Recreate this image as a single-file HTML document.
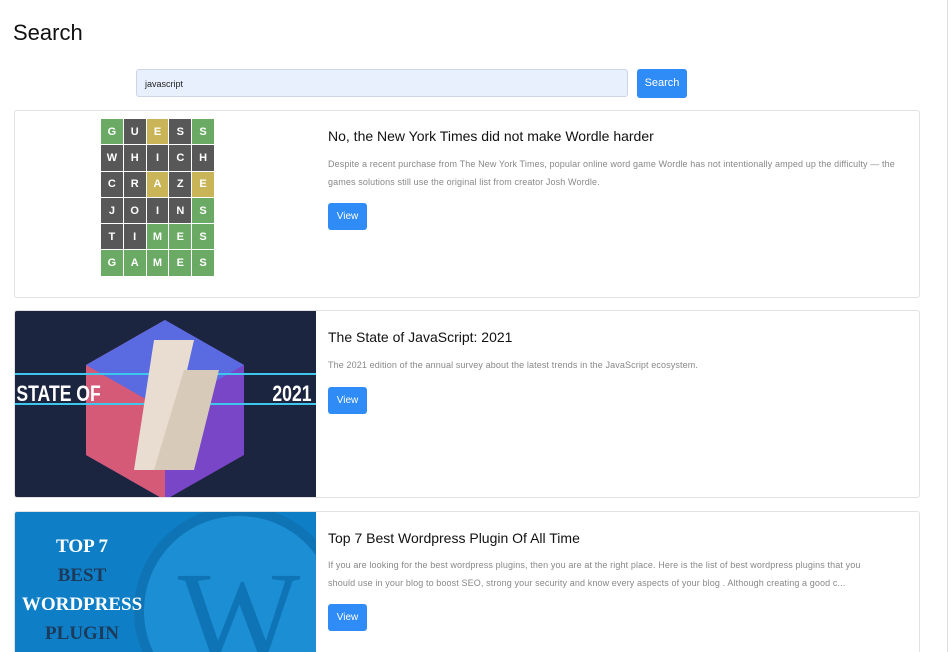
<!DOCTYPE html>
<html><head><meta charset="utf-8"><style>
*{box-sizing:border-box;margin:0;padding:0}
html,body{width:950px;height:652px;overflow:hidden}
body{background:#fff;font-family:"Liberation Sans",sans-serif;position:relative}
h1{position:absolute;left:13px;top:20px;font-size:22px;font-weight:400;color:#111}
.inp{position:absolute;left:136px;top:69px;width:492px;height:28px;background:#e8f0fe;border:1px solid #ccd6e6;border-radius:3px;font-size:9px;padding:9px 8px;color:#222}
.sbtn{position:absolute;left:637px;top:69px;width:50px;height:29px;background:#2f8bf5;border-radius:3px;color:#fff;font-size:11px;text-align:center;line-height:29px}
.card{position:absolute;left:14px;width:906px;border:1px solid #e2e2e2;border-radius:3px;overflow:hidden;background:#fff}
.img{position:absolute;left:-1px;top:-1px;width:302px;height:188px}
.t{position:absolute;left:313px;font-size:14px;color:#111}
.d{position:absolute;left:313px;width:580px;font-size:9px;line-height:18px;color:#888;letter-spacing:0.12px}
.v{position:absolute;left:313px;width:39px;height:27px;background:#2f8bf5;border-radius:3px;color:#fff;font-size:10px;text-align:center;line-height:27px}
.grid{position:absolute;left:86px;top:8px;display:grid;grid-template-columns:repeat(5,21.8px);grid-auto-rows:25.3px;gap:1px}
.grid div{color:#fff;font-size:11px;display:flex;align-items:center;justify-content:center;font-weight:bold}
.g{background:#6aaa64}.k{background:#585858}.y{background:#c9b458}
.sb{position:absolute;left:947px;top:0;width:1px;height:652px;background:#ddd}
</style></head><body>
<h1>Search</h1>
<div class="inp">javascript</div>
<div class="sbtn">Search</div>

<div class="card" style="top:110px;height:188px">
 <div class="grid">
  <div class="g">G</div><div class="k">U</div><div class="y">E</div><div class="k">S</div><div class="g">S</div>
  <div class="k">W</div><div class="k">H</div><div class="k">I</div><div class="k">C</div><div class="k">H</div>
  <div class="k">C</div><div class="k">R</div><div class="y">A</div><div class="k">Z</div><div class="y">E</div>
  <div class="k">J</div><div class="k">O</div><div class="k">I</div><div class="k">N</div><div class="g">S</div>
  <div class="k">T</div><div class="k">I</div><div class="g">M</div><div class="g">E</div><div class="g">S</div>
  <div class="g">G</div><div class="g">A</div><div class="g">M</div><div class="g">E</div><div class="g">S</div>
 </div>
 <div class="t" style="top:17px">No, the New York Times did not make Wordle harder</div>
 <div class="d" style="top:44px">Despite a recent purchase from The New York Times, popular online word game Wordle has not intentionally amped up the difficulty — the games solutions still use the original list from creator Josh Wordle.</div>
 <div class="v" style="top:92px">View</div>
</div>

<div class="card" style="top:310px;height:188px">
 <svg class="img" viewBox="0 0 302 188">
  <rect width="302" height="188" fill="#1c2540"/>
  <polygon points="151,10 230,55 230,145 151,190 72,145 72,55" fill="#7a46c8"/>
  <polygon points="151,10 72,55 72,145 151,190" fill="#d55a78"/>
  <polygon points="151,10 230,55 151,100 72,55" fill="#5a6ae0"/>
  <rect x="0" y="63" width="302" height="2" fill="#3fc6ef"/>
  <rect x="0" y="93" width="302" height="2" fill="#3fc6ef"/>
  <path d="M140 30h40l-30 130h-30z" fill="#e8ddd0"/>
  <path d="M170 60h35l-25 100h-40z" fill="#d8cab8"/>
  <text x="3" y="91" font-family="Liberation Sans" font-weight="bold" font-size="22" fill="#fff" transform="scale(0.8,1)">STATE OF</text>
  <text x="323" y="91" font-family="Liberation Sans" font-weight="bold" font-size="22" fill="#fff" transform="scale(0.8,1)">2021</text>
 </svg>
 <div class="t" style="top:18px">The State of JavaScript: 2021</div>
 <div class="d" style="top:45px">The 2021 edition of the annual survey about the latest trends in the JavaScript ecosystem.</div>
 <div class="v" style="top:76px">View</div>
</div>

<div class="card" style="top:511px;height:150px">
 <svg class="img" viewBox="0 0 302 188">
  <rect width="302" height="188" fill="#0e7fc6"/>
  <circle cx="225" cy="100" r="100" fill="#1c8fd4" stroke="#0f74b5" stroke-width="10"/>
  <text x="225" y="150" text-anchor="middle" font-family="Liberation Serif" font-size="130" fill="#0f74b5">W</text>
  <g font-family="Liberation Serif" font-weight="bold" font-size="19" text-anchor="middle">
   <text x="68" y="41" fill="#fff">TOP 7</text>
   <text x="68" y="70" fill="#1d3a5a">BEST</text>
   <text x="68" y="99" fill="#fff">WORDPRESS</text>
   <text x="68" y="128" fill="#1d3a5a">PLUGIN</text>
  </g>
 </svg>
 <div class="t" style="top:18px">Top 7 Best Wordpress Plugin Of All Time</div>
 <div class="d" style="top:44px;width:560px">If you are looking for the best wordpress plugins, then you are at the right place. Here is the list of best wordpress plugins that you should use in your blog to boost SEO, strong your security and know every aspects of your blog . Although creating a good c...</div>
 <div class="v" style="top:92px">View</div>
</div>
<div class="sb"></div>
</body></html>
